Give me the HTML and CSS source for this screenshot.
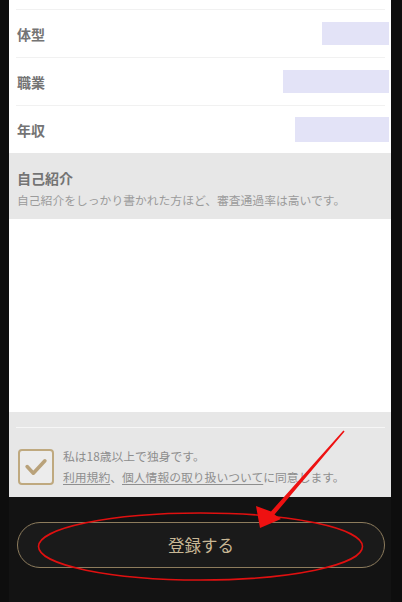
FILE: index.html
```html
<!DOCTYPE html>
<html lang="ja">
<head>
<meta charset="utf-8">
<link rel="stylesheet" href="styles.css">
</head>
<body>
<div class="screen">
  <div class="panel">
    <div class="sep"></div>
    <div class="row"><span class="label">体型</span><span class="value" style="width:67px"></span></div>
    <div class="sep"></div>
    <div class="row"><span class="label">職業</span><span class="value" style="width:106px"></span></div>
    <div class="sep"></div>
    <div class="row"><span class="label">年収</span><span class="value" style="width:94px;height:25px"></span></div>
    <div class="intro">
      <div class="intro-title">自己紹介</div>
      <div class="intro-note">自己紹介をしっかり書かれた方ほど、審査通過率は高いです。</div>
    </div>
    <div class="textarea"></div>
    <div class="agree">
      <div class="sep light"></div>
      <div class="agree-row">
        <div class="checkbox">
          <svg viewBox="0 0 36 36" width="32" height="32"><path d="M8 17.5 L15 25 L28 11" fill="none" stroke="#b9a27a" stroke-width="4" stroke-linecap="round" stroke-linejoin="round"/></svg>
        </div>
        <div class="agree-text">
          <div>私は18歳以上で独身です。</div>
          <div><span class="link">利用規約</span>、<span class="link">個人情報の取り扱いついて</span>に同意します。</div>
        </div>
      </div>
    </div>
  </div>
  <div class="footer">
    <button class="submit">登録する</button>
  </div>
  <svg class="annot" viewBox="0 0 402 602" width="402" height="602">
    <ellipse cx="200.5" cy="546.5" rx="162" ry="33.5" fill="none" stroke="#e01010" stroke-width="1.6"/>
    <polygon points="344.6,431.4 343.4,430.6 271,511.5 256,506 260,528 281,519 274.5,514.5" fill="#ee1111"/>
  </svg>
</div>
</body>
</html>
```
FILE: styles.css
```css
* { box-sizing: border-box; }
html, body { margin: 0; padding: 0; }
body {
  width: 402px;
  height: 602px;
  background: #141414;
  font-family: "Noto Sans CJK JP", "Noto Sans", sans-serif;
  overflow: hidden;
}
.screen {
  position: relative;
  width: 402px;
  height: 602px;
  background: #131313;
  border-left: 9px solid #0e0e0e;
  border-right: 11px solid #0e0e0e;
}
.panel {
  height: 497px;
  background: #fff;
  padding-top: 9px;
  display: flex;
  flex-direction: column;
}
.sep {
  height: 1px;
  margin: 0 6px 0 7px;
  background: #f1f1f1;
}
.sep.light { background: #f6f6f6; }
.row {
  height: 47px;
  display: flex;
  align-items: center;
  justify-content: space-between;
  padding: 0 2px 0 8px;
}
.label {
  font-size: 14px;
  font-weight: 700;
  color: #747474;
}
.value {
  height: 23px;
  background: #e3e3f7;
}
.intro {
  height: 66px;
  background: #e7e7e7;
  padding: 14px 8px 0 8px;
}
.intro-title {
  font-size: 14px;
  font-weight: 700;
  color: #747474;
  line-height: 22px;
}
.intro-note {
  font-size: 11.8px;
  color: #9b9b9b;
  line-height: 16px;
  margin-top: 3px;
  white-space: nowrap;
}
.textarea {
  height: 193px;
  background: #fff;
}
.agree {
  flex: 1;
  background: #e7e7e7;
  padding-top: 15px;
}
.agree-row {
  display: flex;
  align-items: center;
  padding: 17px 0 0 9px;
}
.checkbox {
  width: 36px;
  height: 36px;
  border: 2px solid #bfa97f;
  border-radius: 4px;
  background: #ececec;
  display: flex;
  align-items: center;
  justify-content: center;
  margin-top: 1px;
}
.agree-text {
  margin-left: 9px;
  font-size: 11.8px;
  line-height: 21px;
  color: #8e8e8e;
  white-space: nowrap;
}
.link { text-decoration: underline; text-underline-offset: 2px; }
.footer {
  height: 105px;
  padding: 25px 6px 0 8px;
}
.submit {
  display: block;
  width: 100%;
  height: 46px;
  border: 1.5px solid #8d7c5d;
  border-radius: 23px;
  background: #1a1a1a;
  color: #c8b795;
  font-family: "Noto Sans CJK JP", "Noto Sans", sans-serif;
  font-size: 16.5px;
  padding: 0;
}
.annot {
  position: absolute;
  left: -9px;
  top: 0;
  pointer-events: none;
}
```
